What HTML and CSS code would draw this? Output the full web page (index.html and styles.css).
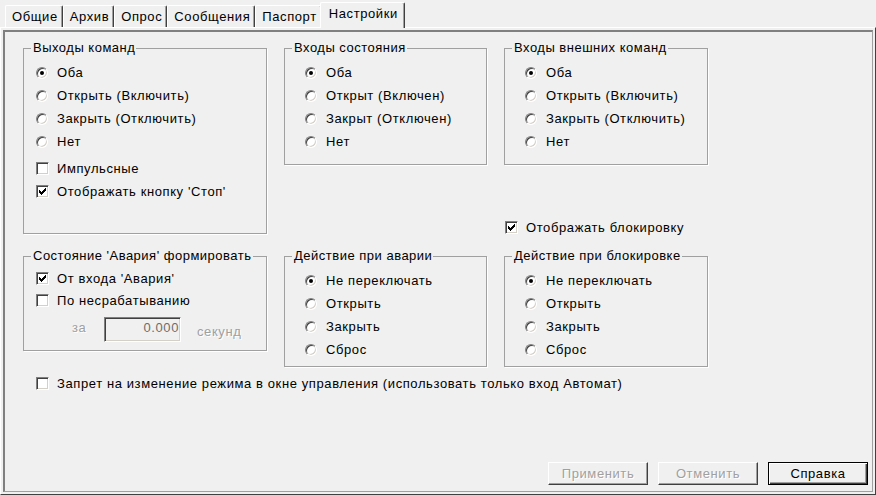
FILE: index.html
```html
<!DOCTYPE html>
<html lang="ru">
<head>
<meta charset="UTF-8">
<title>Настройки</title>
<link rel="stylesheet" href="styles.css">
</head>
<body>

<div class="window">
    <div class="tabbar">
        <div class="tab">Общие</div>
        <div class="tab">Архив</div>
        <div class="tab">Опрос</div>
        <div class="tab">Сообщения</div>
        <div class="tab">Паспорт</div>
        <div class="tab active">Настройки</div>
    </div>

    <div class="pane">
        <div class="page">

            <div class="grid top">
                <fieldset class="group g-tall">
                    <legend>Выходы команд</legend>
                    <div class="opts">
                        <div class="opt"><span class="radio on"></span>Оба</div>
                        <div class="opt"><span class="radio"></span>Открыть (Включить)</div>
                        <div class="opt"><span class="radio"></span>Закрыть (Отключить)</div>
                        <div class="opt"><span class="radio"></span>Нет</div>
                        <div class="opt gap"><span class="check"></span>Импульсные</div>
                        <div class="opt"><span class="check"><svg width="11" height="11" viewBox="0 0 11 11"><path d="M2 4h1v3H2zM3 5h1v3H3zM4 6h1v3H4zM5 5h1v3H5zM6 4h1v3H6zM7 3h1v3H7zM8 2h1v3H8z"/></svg></span>Отображать кнопку 'Стоп'</div>
                    </div>
                </fieldset>

                <fieldset class="group g-short wide">
                    <legend>Входы состояния</legend>
                    <div class="opts">
                        <div class="opt"><span class="radio on"></span>Оба</div>
                        <div class="opt"><span class="radio"></span>Открыт (Включен)</div>
                        <div class="opt"><span class="radio"></span>Закрыт (Отключен)</div>
                        <div class="opt"><span class="radio"></span>Нет</div>
                    </div>
                </fieldset>

                <fieldset class="group g-short wide">
                    <legend>Входы внешних команд</legend>
                    <div class="opts">
                        <div class="opt"><span class="radio on"></span>Оба</div>
                        <div class="opt"><span class="radio"></span>Открыть (Включить)</div>
                        <div class="opt"><span class="radio"></span>Закрыть (Отключить)</div>
                        <div class="opt"><span class="radio"></span>Нет</div>
                    </div>
                </fieldset>

                <div class="opt lock"><span class="check"><svg width="11" height="11" viewBox="0 0 11 11"><path d="M2 4h1v3H2zM3 5h1v3H3zM4 6h1v3H4zM5 5h1v3H5zM6 4h1v3H6zM7 3h1v3H7zM8 2h1v3H8z"/></svg></span>Отображать блокировку</div>
            </div>

            <div class="grid bottom">
                <fieldset class="group g-alarm">
                    <legend>Состояние 'Авария' формировать</legend>
                    <div class="opts tight">
                        <div class="opt"><span class="check"><svg width="11" height="11" viewBox="0 0 11 11"><path d="M2 4h1v3H2zM3 5h1v3H3zM4 6h1v3H4zM5 5h1v3H5zM6 4h1v3H6zM7 3h1v3H7zM8 2h1v3H8z"/></svg></span>От входа 'Авария'</div>
                        <div class="opt"><span class="check"></span>По несрабатыванию</div>
                        <div class="delay">
                            <span class="muted za">за</span>
                            <div class="edit">0.000</div>
                            <span class="muted sec">секунд</span>
                        </div>
                    </div>
                </fieldset>

                <fieldset class="group g-action wide">
                    <legend>Действие при аварии</legend>
                    <div class="opts">
                        <div class="opt"><span class="radio on"></span>Не переключать</div>
                        <div class="opt"><span class="radio"></span>Открыть</div>
                        <div class="opt"><span class="radio"></span>Закрыть</div>
                        <div class="opt"><span class="radio"></span>Сброс</div>
                    </div>
                </fieldset>

                <fieldset class="group g-action wide">
                    <legend>Действие при блокировке</legend>
                    <div class="opts">
                        <div class="opt"><span class="radio on"></span>Не переключать</div>
                        <div class="opt"><span class="radio"></span>Открыть</div>
                        <div class="opt"><span class="radio"></span>Закрыть</div>
                        <div class="opt"><span class="radio"></span>Сброс</div>
                    </div>
                </fieldset>
            </div>

            <div class="opt ban"><span class="check"></span>Запрет на изменение режима в окне управления (использовать только вход Автомат)</div>

            <div class="buttons">
                <button class="btn" disabled>Применить</button>
                <button class="btn" disabled>Отменить</button>
                <button class="btn default">Справка</button>
            </div>

        </div>
    </div>
</div>

</body>
</html>
```

FILE: styles.css
```css
* {
    box-sizing: border-box;
}
body {
    margin: 0;
    background-color: #f0f0f0;
    font-family: "Liberation Sans", Arial, sans-serif;
    font-size: 13px;
    letter-spacing: 0.6px;
    color: #000000;
}
.window {
    height: 495px;
    display: flex;
    flex-direction: column;
    overflow: hidden;
}

/* tabs */
.tabbar {
    display: flex;
    align-items: flex-end;
    height: 27px;
    padding-left: 5px;
}
.tab {
    height: 22px;
    padding: 0 4px 0 6px;
    line-height: 21px;
    border-top: 1px solid #ffffff;
    border-left: 1px solid #ffffff;
    border-right: 1px solid #404040;
    border-radius: 2px 2px 0 0;
    box-shadow: inset -1px 0 0 #a0a0a0;
}
.tab.active {
    height: 26px;
    margin: 0 -2px -1px;
    padding: 0 6px 3px 8px;
    line-height: 22px;
    background-color: #f0f0f0;
    position: relative;
    z-index: 1;
}
.pane {
    flex: 1;
    display: flex;
    padding: 2px;
    border: 1px solid;
    border-color: #ffffff #404040 #404040 #ffffff;
}
.page {
    flex: 1;
    display: flex;
    flex-direction: column;
    padding: 9px 4px 6px 18px;
    border-style: solid;
    border-width: 2px 1px 1px 2px;
    border-color: #808080 #a0a0a0 #a0a0a0 #808080;
}

/* group boxes */
.grid {
    display: grid;
    grid-template-columns: 244px 203px 204px;
    column-gap: 17px;
    align-items: start;
}
.top {
    grid-template-rows: auto 1fr;
}
.bottom {
    margin-top: 15px;
}
.group {
    margin: 0;
    padding: 0;
    min-width: 0;
    border: 1px solid #a0a0a0;
    box-shadow: 1px 1px 0 #ffffff;
}
.group legend {
    margin-left: 7px;
    padding: 0 1px 0 2px;
    line-height: 14px;
    letter-spacing: 0.5px;
}
.g-tall {
    grid-row: span 2;
    height: 193px;
}
.g-short {
    height: 124px;
}
.g-alarm {
    height: 102px;
}
.g-action {
    height: 118px;
}
.opts {
    padding: 6px 0 0 12px;
}
.wide .opts {
    padding-left: 20px;
}
.opt {
    display: flex;
    align-items: center;
    height: 23px;
    white-space: nowrap;
}
.opts.tight {
    padding-top: 4px;
}
.tight .opt {
    height: 22px;
}
.opt.gap {
    margin-top: 4px;
}
.lock {
    grid-column: 3;
    grid-row: 2;
    align-self: end;
    height: 14px;
    margin-left: 1px;
}
.ban {
    margin: 5px 0 0 13px;
}

/* controls */
.radio {
    width: 12px;
    height: 12px;
    margin-right: 9px;
    flex-shrink: 0;
    display: flex;
    align-items: center;
    justify-content: center;
    border-radius: 50%;
    background-color: #ffffff;
    border: 1px solid;
    border-color: #808080 #ffffff #ffffff #808080;
    box-shadow: inset 1px 1px 0 #404040, inset -1px -1px 0 #d4d0c8;
}
.radio.on::after {
    content: "";
    width: 4px;
    height: 4px;
    border-radius: 50%;
    background-color: #000000;
}
.check {
    width: 13px;
    height: 13px;
    margin-right: 8px;
    flex-shrink: 0;
    background-color: #ffffff;
    border: 1px solid;
    border-color: #808080 #ffffff #ffffff #808080;
    box-shadow: inset 1px 1px 0 #404040, inset -1px -1px 0 #d4d0c8;
}
.check svg {
    display: block;
    shape-rendering: crispEdges;
}

/* delay field */
.delay {
    display: grid;
    grid-template-columns: 32px 77px auto;
    align-items: start;
    margin-top: 6px;
    padding-left: 36px;
}
.muted {
    color: #a0a0a0;
    text-shadow: 1px 1px 0 #ffffff;
    line-height: 14px;
}
.za {
    margin-top: 4px;
}
.sec {
    margin: 8px 0 0 16px;
}
.edit {
    height: 25px;
    padding: 1px 1px 0 0;
    text-align: right;
    line-height: 18px;
    color: #6d6d6d;
    border: 1px solid;
    border-color: #808080 #ffffff #ffffff #808080;
    box-shadow: inset 1px 1px 0 #404040, inset -1px -1px 0 #d4d0c8;
}

/* buttons */
.buttons {
    margin-top: auto;
    display: flex;
    justify-content: flex-end;
    gap: 10px;
}
.btn {
    width: 100px;
    height: 23px;
    padding: 0;
    font: inherit;
    letter-spacing: inherit;
    color: #000000;
    background-color: #f0f0f0;
    border: 1px solid;
    border-color: #ffffff #404040 #404040 #ffffff;
    box-shadow: inset -1px -1px 0 #a0a0a0;
}
.btn:disabled {
    color: #a0a0a0;
    text-shadow: 1px 1px 0 #ffffff;
}
.btn.default {
    border-color: #000000;
    box-shadow: inset 1px 1px 0 #ffffff, inset -1px -1px 0 #404040, inset -2px -2px 0 #a0a0a0;
}
```
